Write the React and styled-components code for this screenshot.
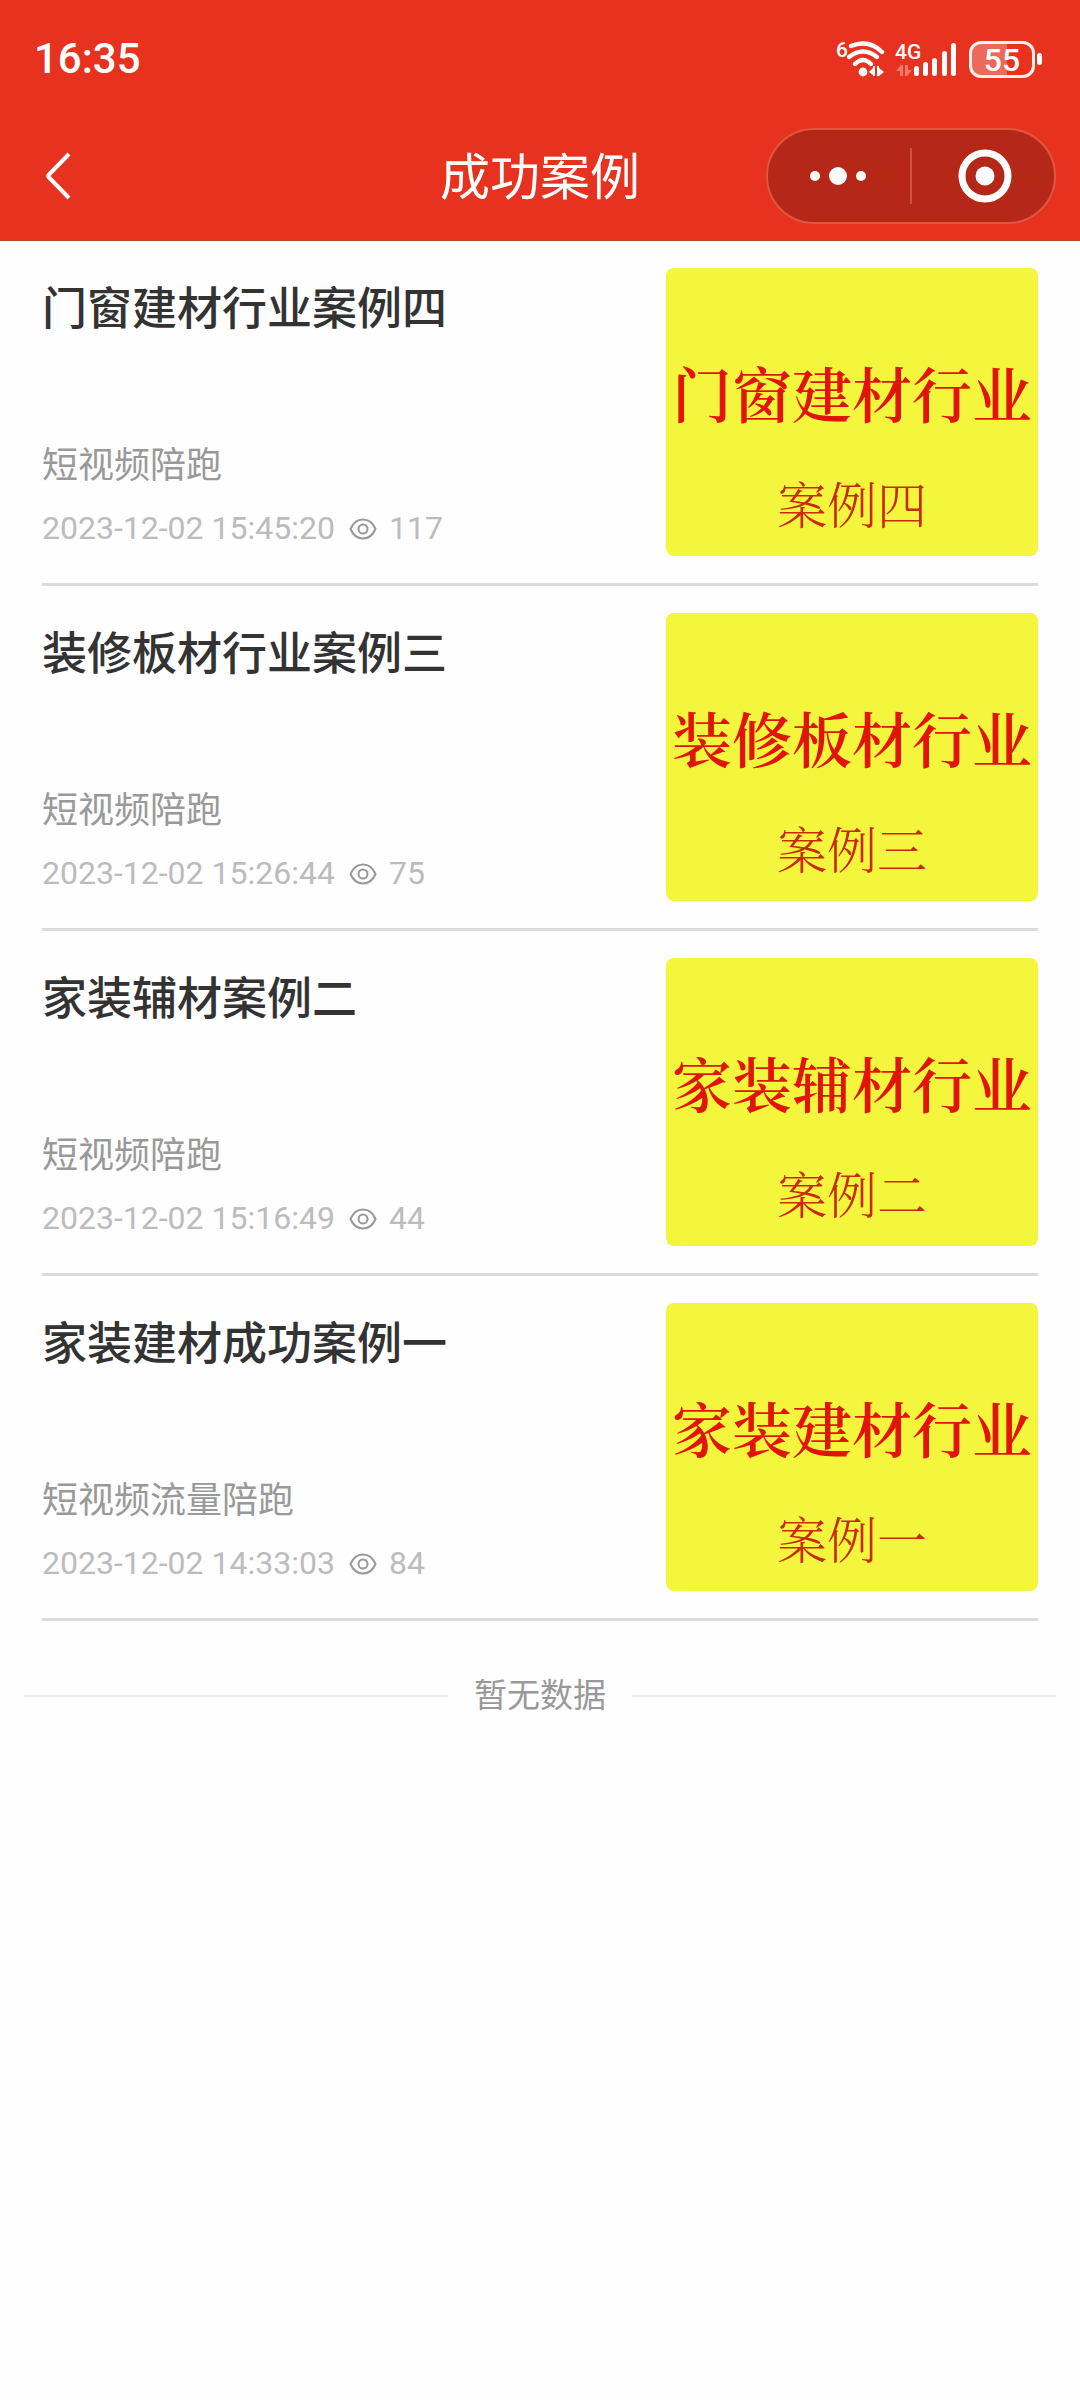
import React from "react";
import styled, { createGlobalStyle } from "styled-components";

const GlobalStyle = createGlobalStyle`
  * {
    box-sizing: border-box;
  }
  body {
    margin: 0;
    background: #fefefe;
    font-family: Roboto, "Noto Sans CJK SC", sans-serif;
  }
`;

const Header = styled.header`
  border-bottom: 1px solid #b8452f;
  background: #e6321f;
  color: #ffffff;
`;

const StatusBar = styled.div`
  display: flex;
  align-items: center;
  justify-content: space-between;
  height: 112px;
  padding: 6px 38px 0 34px;
`;

const Clock = styled.time`
  font-size: 42px;
  font-weight: 500;
  line-height: 48px;
`;

const StatusIcons = styled.div`
  display: flex;
  align-items: center;
  gap: 8px;
`;

const StatusIcon = styled.svg`
  display: block;
  font-family: Roboto, sans-serif;
  font-size: 21px;
  font-weight: 500;
`;

const Battery = styled.div`
  display: flex;
  align-items: center;
  gap: 2px;
  &::after {
    content: "";
    width: 5px;
    height: 12px;
    border-radius: 3px;
    background: #ffffff;
  }
`;

const BatteryBody = styled.div`
  width: 66px;
  height: 37px;
  border: 3px solid #fff0ea;
  border-radius: 12px;
  background: linear-gradient(
    to right,
    rgba(255, 255, 255, 0.27) 58%,
    transparent 58%
  );
  font-size: 32px;
  font-weight: 500;
  line-height: 32px;
  text-align: center;
`;

const NavBar = styled.nav`
  display: grid;
  grid-template-columns: 1fr auto 1fr;
  align-items: center;
  height: 128px;
  padding: 0 24px;
`;

const IconButton = styled.button`
  display: flex;
  align-items: center;
  justify-content: center;
  padding: 0;
  border: 0;
  background: none;
  color: inherit;
  cursor: pointer;
`;

const BackButton = styled(IconButton)`
  width: 68px;
  height: 68px;
`;

const PageTitle = styled.h1`
  margin: 0;
  padding-top: 4px;
  font-size: 50px;
  font-weight: 400;
  line-height: 72px;
`;

const Capsule = styled.div`
  display: grid;
  grid-template-columns: 1fr 2px 1fr;
  align-items: center;
  justify-self: end;
  width: 290px;
  height: 96px;
  border: 2px solid #e25541;
  border-radius: 48px;
  background: #b52817;
`;

const CapsuleButton = styled(IconButton)`
  height: 92px;
`;

const CloseButton = styled(CapsuleButton)`
  padding-left: 4px;
`;

const CapsuleDivider = styled.span`
  height: 56px;
  background: #d2523f;
`;

const CaseList = styled.ul`
  margin: 0;
  padding: 0 42px;
  list-style: none;
`;

const CaseItem = styled.li`
  border-bottom: 3px solid #dbdbdb;
`;

const CaseLink = styled.a`
  display: flex;
  justify-content: space-between;
  padding: 27px 0;
  color: inherit;
  text-decoration: none;
`;

const CaseInfo = styled.div`
  display: flex;
  flex-direction: column;
  padding: 12px 0 6px;
`;

const CaseTitle = styled.h2`
  margin: 0 0 auto;
  color: #333333;
  font-size: 45px;
  font-weight: 500;
  line-height: 60px;
`;

const CaseCategory = styled.p`
  margin: 0 0 16px;
  color: #999999;
  font-size: 36px;
  line-height: 48px;
`;

const CaseMeta = styled.div`
  display: flex;
  align-items: center;
  color: #bcbcbc;
  font-size: 32px;
  line-height: 44px;
`;

const EyeIcon = styled.svg`
  margin: 2px 12px 0 14px;
`;

const Cover = styled.div`
  display: flex;
  flex-direction: column;
  align-items: center;
  flex: none;
  width: 372px;
  height: 288px;
  padding-top: 80px;
  border-radius: 8px;
  background: #f4f53d;
  font-family: "Noto Serif CJK SC", SimSun, "Noto Sans CJK SC", serif;
`;

const CoverTitle = styled.span`
  color: #e01507;
  font-size: 60px;
  font-weight: 600;
  line-height: 88px;
  white-space: nowrap;
`;

const CoverCaption = styled.span`
  margin-top: 34px;
  color: #c82a08;
  font-size: 50px;
  font-weight: 300;
  line-height: 64px;
`;

const ListEnd = styled.div`
  display: flex;
  align-items: center;
  gap: 26px;
  padding: 51px 24px;
  color: #999999;
  font-size: 33px;
  line-height: 48px;
  &::before,
  &::after {
    content: "";
    flex: 1;
    height: 2px;
    background: #ebebeb;
  }
`;

const cases = [
  {
    title: "门窗建材行业案例四",
    category: "短视频陪跑",
    date: "2023-12-02 15:45:20",
    views: 117,
    cover: "门窗建材行业",
    caption: "案例四",
  },
  {
    title: "装修板材行业案例三",
    category: "短视频陪跑",
    date: "2023-12-02 15:26:44",
    views: 75,
    cover: "装修板材行业",
    caption: "案例三",
  },
  {
    title: "家装辅材案例二",
    category: "短视频陪跑",
    date: "2023-12-02 15:16:49",
    views: 44,
    cover: "家装辅材行业",
    caption: "案例二",
  },
  {
    title: "家装建材成功案例一",
    category: "短视频流量陪跑",
    date: "2023-12-02 14:33:03",
    views: 84,
    cover: "家装建材行业",
    caption: "案例一",
  },
];

function WifiIcon() {
  return (
    <StatusIcon width="52" height="40" viewBox="0 0 52 40" fill="#ffffff">
      <text x="1" y="18">
        6
      </text>
      <g fill="none" stroke="#ffffff" strokeWidth="4.4" strokeLinecap="round">
        <path d="M16 7Q34 0 47 13" />
        <path d="M14 18Q28 7 42 18" />
        <path d="M20 25Q28 17 36 25" />
      </g>
      <circle cx="28" cy="33" r="4.4" />
      <path d="M34 33l4 -4v-2h2v10h-2v-1zM42 27h2v2l5 4l-5 4h-2z" />
    </StatusIcon>
  );
}

function SignalIcon() {
  return (
    <StatusIcon width="66" height="40" viewBox="0 0 66 40" fill="#ffffff">
      <text x="0" y="20">
        4G
      </text>
      <path
        d="M1 32l5 -6h2v11h-3v-5zM10 26h3v5h4l-5 6h-2z"
        fillOpacity="0.35"
      />
      <rect x="19" y="27" width="5" height="10" rx="2.5" />
      <rect x="28" y="23" width="5" height="14" rx="2.5" />
      <rect x="37" y="19" width="5" height="18" rx="2.5" />
      <rect x="47" y="12" width="5" height="25" rx="2.5" />
      <rect x="56" y="4" width="5" height="33" rx="2.5" />
    </StatusIcon>
  );
}

function CaseCard({ item }) {
  return (
    <CaseItem>
      <CaseLink href="#">
        <CaseInfo>
          <CaseTitle>{item.title}</CaseTitle>
          <CaseCategory>{item.category}</CaseCategory>
          <CaseMeta>
            <time>{item.date}</time>
            <EyeIcon
              width="28"
              height="22"
              viewBox="0 0 28 22"
              fill="none"
              stroke="#999999"
              strokeWidth="2"
              strokeLinejoin="round"
            >
              <path d="M1.5 11C4 5 8.500 1.500 14 1.500S24 5 26.500 11C24 17 19.500 20.500 14 20.500S4 17 1.500 11Z" />
              <circle cx="14" cy="11" r="4.500" />
            </EyeIcon>
            <span>{item.views}</span>
          </CaseMeta>
        </CaseInfo>
        <Cover>
          <CoverTitle>{item.cover}</CoverTitle>
          <CoverCaption>{item.caption}</CoverCaption>
        </Cover>
      </CaseLink>
    </CaseItem>
  );
}

export default function App() {
  return (
    <>
      <GlobalStyle />
      <Header>
        <StatusBar>
          <Clock>16:35</Clock>
          <StatusIcons>
            <WifiIcon />
            <SignalIcon />
            <Battery>
              <BatteryBody>55</BatteryBody>
            </Battery>
          </StatusIcons>
        </StatusBar>
        <NavBar>
          <BackButton aria-label="返回">
            <svg
              width="28"
              height="48"
              viewBox="0 0 28 48"
              fill="none"
              stroke="currentColor"
              strokeWidth="4"
            >
              <path d="M25 2L5 22.500Q3.500 24 5 25.500L25 46" />
            </svg>
          </BackButton>
          <PageTitle>成功案例</PageTitle>
          <Capsule>
            <CapsuleButton aria-label="更多">
              <svg width="58" height="20" viewBox="0 0 58 20" fill="#ffffff">
                <circle cx="5" cy="10" r="5" />
                <circle cx="28" cy="10" r="9" />
                <circle cx="51" cy="10" r="5" />
              </svg>
            </CapsuleButton>
            <CapsuleDivider />
            <CloseButton aria-label="关闭">
              <svg width="54" height="54" viewBox="0 0 54 54">
                <circle
                  cx="27"
                  cy="27"
                  r="23"
                  fill="none"
                  stroke="#ffffff"
                  strokeWidth="7"
                />
                <circle cx="27" cy="27" r="9.500" fill="#ffffff" />
              </svg>
            </CloseButton>
          </Capsule>
        </NavBar>
      </Header>
      <main>
        <CaseList>
          {cases.map((item) => (
            <CaseCard key={item.title} item={item} />
          ))}
        </CaseList>
        <ListEnd>暂无数据</ListEnd>
      </main>
    </>
  );
}
